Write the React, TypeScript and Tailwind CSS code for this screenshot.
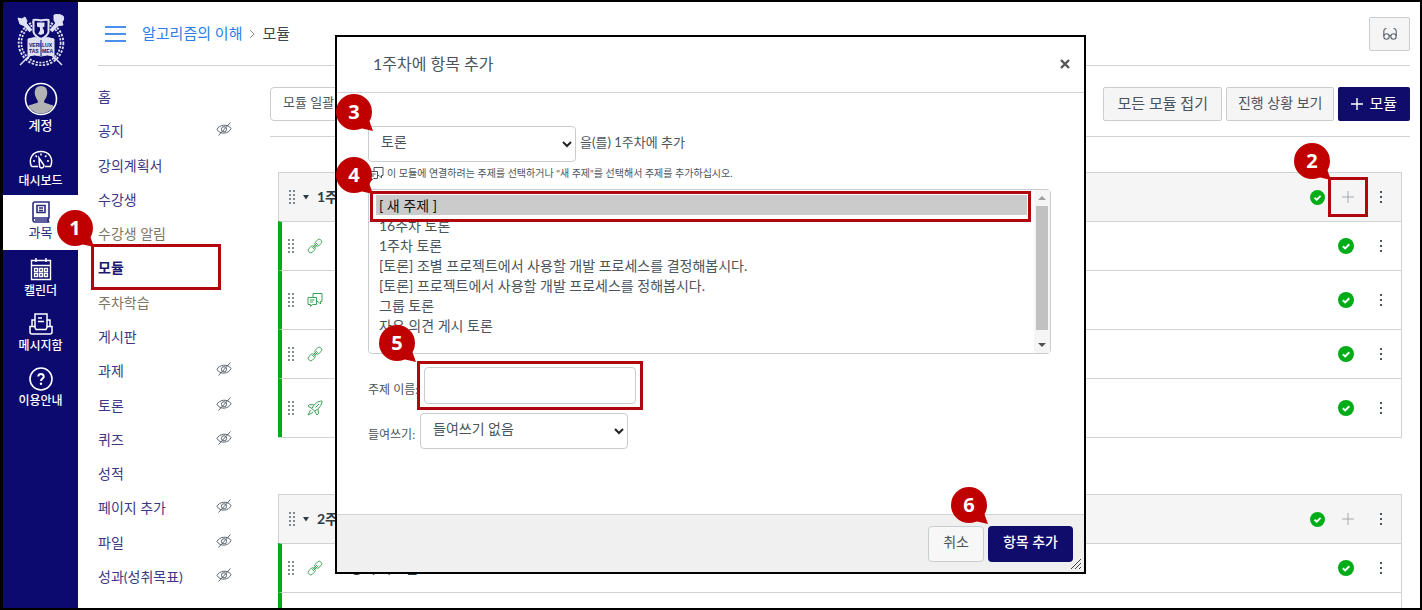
import { ReactNode } from "react"

interface IconProps {
    className?: string
}

interface MenuItem {
    label: string
    hidden?: boolean
    muted?: boolean
    active?: boolean
}

interface ModuleItem {
    title: string
    icon: ReactNode
    tall?: boolean
}

//* numbered red balloon, its tail points at the bottom right corner
const Callout: React.FC<{ value: number; className: string }> = ({ value, className }) => (
    <span className={`absolute z-10 flex h-[37px] w-[37px] pointer-events-none ${className}`}>
        <svg viewBox="0 0 37 37" className="absolute inset-0 h-full w-full" fill="#c00000" aria-hidden="true">
            <circle cx="18" cy="18" r="18" />
            <path d="M24 34L33 26L37 37Z" />
        </svg>
        <span className="relative w-9 text-center font-['Open_Sans',sans-serif] text-xl/[36px] font-bold text-white">{value}</span>
    </span>
)

const Crest = () => (
    <svg viewBox="0 0 50 52" className="h-[52px] w-[50px]" fill="none" stroke="#dfe2f4" aria-hidden="true">
        <circle cx="25" cy="29" r="21" strokeWidth="4.500" strokeDasharray="2.200 1.400" />
        <circle cx="25" cy="29" r="21" strokeWidth="1" stroke="#0c0a6e" />
        <path d="M6 7L15 17M44 7L35 17" strokeWidth="4" />
        <path d="M12 43L4 51M38 43L46 51M15 40L10 46M35 40L40 46" strokeWidth="1.500" />
        <path d="M2 4L6 5L9 3L11 7L9 12L4 10Z" fill="#dfe2f4" />
        <path d="M38 6L38 1Q43 -1 47 2Q49 5 46 8L47 11L41 12Z" fill="#dfe2f4" />
        <path d="M12 25Q19 22 25 25Q31 22 38 25V42Q31 40 25 42Q19 40 12 42Z" fill="#dfe2f4" strokeWidth="1" />
        <path d="M25 25V42" stroke="#0c0a6e" />
        <path d="M17.500 6Q21 5.500 25 6.500Q29 5.500 32.500 6V18Q31.500 22 25 25Q18.500 22 17.500 18Z" fill="#0c0a6e" strokeWidth="2" />
        <path d="M21 8.500H28.500V12.500L26.500 13.500L28 16.500V19.500L25 21L22 20L24 16.500V13.500L21 12.500Z" fill="#dfe2f4" stroke="none" />
        <g fill="#0c0a6e" stroke="none" className="font-['Liberation_Sans',sans-serif] text-[5px] font-bold">
            <text x="13" y="33">VERI</text>
            <text x="26" y="33">LUX</text>
            <text x="13" y="39">TAS</text>
            <text x="26" y="39">MEA</text>
        </g>
    </svg>
)

const Avatar = () => (
    <svg viewBox="0 0 34 34" className="h-[34px] w-[34px]" aria-hidden="true">
        <clipPath id="avatar"><circle cx="17" cy="17" r="14.500" /></clipPath>
        <g clipPath="url(#avatar)">
            <path d="M17 4C12 4 10 8 11 13C12 17 14 18 14 20C13 22 3 22 2 27V34H32V27C31 22 21 22 20 20C20 18 22 17 23 13C24 8 22 4 17 4Z" fill="#b3b3b3" />
        </g>
        <circle cx="17" cy="17" r="15.500" fill="none" stroke="#fff" strokeWidth="1.600" />
    </svg>
)

const DashboardIcon = () => (
    <svg viewBox="0 0 24 24" className="h-6 w-6" fill="none" stroke="currentColor" strokeWidth="1.5" aria-hidden="true">
        <path d="M2.500 19.500C-1 11 4 4.500 12 4.500S25 11 21.500 19.500H16M2.500 19.500H9" />
        <path d="M10 11L14.500 17.500A2.200 2.200 0 1 1 10.500 18.500Z" />
        <path d="M12 6.500V8.500M4 14H6M18 14H20M6.500 8.500L8 10M17.500 8.500L16 10" />
    </svg>
)

const CourseIcon = () => (
    <svg viewBox="0 0 24 24" className="h-6 w-6" fill="none" stroke="currentColor" strokeWidth="1.6" aria-hidden="true">
        <path d="M20 18V2H6Q4 2 4 4V20Q4 22 6 22H20.500M20.500 18H6Q4 18 4 20M6 20H20M19 18V22" />
        <path d="M8 5.500H16V12.500H8ZM10 8H14M10 10.500H14" />
    </svg>
)

const CalendarIcon = () => (
    <svg viewBox="0 0 24 24" className="h-6 w-6" fill="none" stroke="currentColor" strokeWidth="1.4" aria-hidden="true">
        <path d="M2.500 3.500H21.500V22.500H2.500ZM2.500 8.500H21.500M7 1V5M17 1V5" />
        <path d="M5.500 11.500H8.500V14.500H5.500ZM10.500 11.500H13.500V14.500H10.500ZM15.500 11.500H18.500V14.500H15.500ZM5.500 16.500H8.500V19.500H5.500ZM10.500 16.500H13.500V19.500H10.500ZM15.500 16.500H18.500V19.500H15.500Z" />
    </svg>
)

const InboxIcon = () => (
    <svg viewBox="0 0 24 24" className="h-6 w-6" fill="none" stroke="currentColor" strokeWidth="1.5" aria-hidden="true">
        <path d="M6 15V2H18V15M9 6H13M9 9.500H15" />
        <path d="M6 8H3V14.500M18 8H21V14.500M1 14.500V20Q1 22 3 22H21Q23 22 23 20V14.500H18.500L17 17.500H7L5.500 14.500Z" />
    </svg>
)

const HelpIcon = () => (
    <svg viewBox="0 0 24 24" className="h-6 w-6" fill="none" stroke="currentColor" aria-hidden="true">
        <circle cx="12" cy="12" r="11" strokeWidth="1.6" />
        <path d="M9.200 9.500Q9.500 7 12 7T14.800 9.500C14.800 11.500 12 11.500 12 14" strokeWidth="2" />
        <circle cx="12" cy="16.800" r="1.200" fill="currentColor" stroke="none" />
    </svg>
)

const HiddenIcon = () => (
    <svg viewBox="0 0 16 16" className="mb-1 h-4 w-4 text-[#5b656e]" fill="none" stroke="currentColor" strokeWidth="1" role="img" aria-label="숨김">
        <path d="M1 8.500C3 3.500 12 2.500 15 7.500C13 13 4 14 1 8.500Z" />
        <circle cx="8" cy="8.300" r="2.600" />
        <path d="M2.500 14.500L14.500 1.500" />
    </svg>
)

const DragDots = () => (
    <svg viewBox="0 0 8 16" className="h-4 w-2" fill="#4a545c" aria-hidden="true">
        {[2, 6, 10, 14].map((y) => (
            <g key={y}>
                <circle cx="2" cy={y} r="0.900" />
                <circle cx="6" cy={y} r="0.900" />
            </g>
        ))}
    </svg>
)

const LinkIcon = () => (
    <svg viewBox="0 0 16 16" className="h-4 w-4" fill="none" stroke="#3da354" strokeWidth="0.900" aria-hidden="true">
        <rect x="-3.800" y="-2.500" width="7.600" height="5" rx="2.300" transform="translate(11.300 4.700) rotate(-45)" />
        <rect x="-3.800" y="-2.500" width="7.600" height="5" rx="2.300" transform="translate(4.700 11.300) rotate(-45)" />
        <path d="M5 10L10 5M6 11L11 6" />
    </svg>
)

const DiscussionIcon: React.FC<IconProps> = ({ className = "text-[#3da354]" }) => (
    <svg viewBox="0 0 16 16" className={`h-4 w-4 ${className}`} fill="none" stroke="currentColor" strokeWidth="1" aria-hidden="true">
        <path d="M1 5.500H9.500V12.500H5.500L3.500 14.500V12.500H1ZM3 8H7.500M3 10H6" />
        <path d="M6 5.500V1.500H15V9.500H13.500V12L11 9.500H9.500" />
    </svg>
)

const RocketIcon = () => (
    <svg viewBox="0 0 16 16" className="h-4 w-4" fill="none" stroke="#3da354" strokeWidth="1" aria-hidden="true">
        <path d="M15 1C11 1 7 4 5 8.500L7.500 11C12 9 15 5 15 1ZM7 5L2.500 4.500L1 6L5 8.500M11 9L11.500 13.500L10 15L7.500 11" />
        <path d="M3.500 10L1 15L6 12.500" />
        <path d="M8.500 7.500L12 4" />
    </svg>
)

const Published: React.FC<IconProps> = ({ className = "" }) => (
    <svg viewBox="0 0 16 16" className={className} role="img" aria-label="게시됨">
        <circle cx="8" cy="8" r="8" fill="#00ac18" />
        <path d="M4.800 8.200L7.200 10.400L11.300 6.200" fill="none" stroke="#fff" strokeWidth="2" />
    </svg>
)

const Kebab = () => (
    <button type="button" aria-label="설정" className="flex w-4 flex-col items-center gap-[3px]">
        <span className="h-0.5 w-0.5 bg-[#4a545c]" />
        <span className="h-0.5 w-0.5 bg-[#4a545c]" />
        <span className="h-0.5 w-0.5 bg-[#4a545c]" />
    </button>
)

const Chevron = () => (
    <svg viewBox="0 0 10 8" className="pointer-events-none absolute right-1 top-1/2 h-2 w-2.5 -translate-y-1/2" fill="none" stroke="#222" strokeWidth="2" aria-hidden="true">
        <path d="M1 2L5 6L9 2" />
    </svg>
)

const globalNav = [
    { label: "대시보드", icon: <DashboardIcon /> },
    { label: "과목", icon: <CourseIcon />, active: true },
    { label: "캘린더", icon: <CalendarIcon /> },
    { label: "메시지함", icon: <InboxIcon /> },
    { label: "이용안내", icon: <HelpIcon /> },
]

const courseMenu: MenuItem[] = [
    { label: "홈" },
    { label: "공지", hidden: true },
    { label: "강의계획서" },
    { label: "수강생" },
    { label: "수강생 알림", muted: true },
    { label: "모듈", active: true },
    { label: "주차학습", muted: true },
    { label: "게시판" },
    { label: "과제", hidden: true },
    { label: "토론", hidden: true },
    { label: "퀴즈", hidden: true },
    { label: "성적" },
    { label: "페이지 추가", hidden: true },
    { label: "파일", hidden: true },
    { label: "성과(성취목표)", hidden: true },
]

const topics = [
    "[ 새 주제 ]",
    "16주차 토론",
    "1주차 토론",
    "[토론] 조별 프로젝트에서 사용할 개발 프로세스를 결정해봅시다.",
    "[토론] 프로젝트에서 사용할 개발 프로세스를 정해봅시다.",
    "그룹 토론",
    "자유 의견 게시 토론",
]

const GlobalNav = () => (
    <nav className="flex w-[75px] shrink-0 flex-col items-center bg-[#0c0a6e] pt-3 text-white">
        <a href="#home" aria-label="홈"><Crest /></a>
        <a href="#account" className="mt-4 flex h-[58px] flex-col items-center">
            <Avatar />
            <span className="text-[13px]/[18px] font-medium">계정</span>
        </a>
        {globalNav.map((item) => (
            <a
                key={item.label}
                href="#nav"
                className={`flex h-[55px] w-full flex-col items-center ${item.active ? "bg-white pt-[5px] text-[#2d2b80]" : "pt-[7px]"}`}
            >
                {item.icon}
                <span className={item.active ? "text-[13px]/[16px]" : "text-xs/[20px] font-medium"}>{item.label}</span>
            </a>
        ))}
    </nav>
)

const CourseMenu = () => (
    <nav className="flex w-[134px] shrink-0 flex-col py-3.5 text-sm">
        {courseMenu.map((item) => (
            <div key={item.label} className="relative flex flex-1 items-center justify-between">
                <a
                    href="#menu"
                    className={item.active ? "font-bold text-[#1c1a70]" : item.muted ? "text-[#7c7763]" : "text-[#3b3784]"}
                >
                    {item.label}
                </a>
                {item.hidden && <HiddenIcon />}
                {item.active && (
                    <span className="pointer-events-none absolute -bottom-1 -left-[7px] -top-[7px] right-[11px] border-3 border-[#b0060d]">
                        <Callout value={1} className="bottom-full right-full" />
                    </span>
                )}
            </div>
        ))}
    </nav>
)

const Module: React.FC<{ title: string; items: ModuleItem[]; marked?: boolean }> = ({ title, items, marked }) => (
    <section className="border border-[#cfd3d6]">
        <div className="flex h-12 items-center bg-[#f5f5f5] pl-[9px] pr-3">
            <DragDots />
            <svg viewBox="0 0 6 6" className="ml-[7px] h-1.5 w-1.5" fill="#2d3b45" aria-hidden="true"><path d="M0 1H6L3 5.500Z" /></svg>
            <h2 className="ml-2 text-sm font-bold text-[#2d3b45]">{title}</h2>
            <Published className="ml-auto h-[15px] w-[15px]" />
            <span className="relative mx-[3px] flex h-10 w-10 items-center justify-center">
                <button type="button" aria-label="항목 추가">
                    <svg viewBox="0 0 12 12" className="h-3 w-3" stroke="#a5a9ac" aria-hidden="true"><path d="M6 0V12M0 6H12" /></svg>
                </button>
                {marked && (
                    <span className="pointer-events-none absolute inset-0 border-3 border-[#b0060d]">
                        <Callout value={2} className="bottom-full right-full" />
                    </span>
                )}
            </span>
            <span className="ml-0.5"><Kebab /></span>
        </div>
        <ul>
            {items.map((item, i) => (
                <li
                    key={i}
                    className={`-ml-px flex items-center border-l-4 border-t border-l-[#00ac18] border-t-[#cfd3d6] pl-[5px] pr-3 ${item.tall ? "h-[59px]" : "h-[49px]"}`}
                >
                    <DragDots />
                    <span className="ml-3">{item.icon}</span>
                    <a href="#item" className="ml-[27px] text-sm text-[#2d3b45]">{item.title}</a>
                    <Published className="ml-auto mr-[19px] h-4 w-4" />
                    <Kebab />
                </li>
            ))}
        </ul>
    </section>
)

const AddItemDialog = () => (
    <div role="dialog" aria-labelledby="dialog-title" className="flex w-[751px] flex-col border-2 border-black bg-white text-[#4a545c]">
        <div className="flex h-14 items-center justify-between border-b border-[#cfd3d6] pb-0.5 pl-9 pr-3.5">
            <h1 id="dialog-title" className="text-base">1주차에 항목 추가</h1>
            <button type="button" aria-label="닫기">
                <svg viewBox="0 0 10 10" className="h-2.5 w-2.5" stroke="#555" strokeWidth="2.4" aria-hidden="true"><path d="M1 1L9 9M9 1L1 9" /></svg>
            </button>
        </div>
        <form className="px-[31px] pb-[65px] pt-[33px]">
            <div className="flex items-center gap-1">
                <div className="relative w-52">
                    <select id="kind" aria-label="항목 유형" className="h-9 w-full appearance-none rounded-sm border border-[#c7cdd1] bg-white px-3 pb-1 text-sm">
                        <option>토론</option>
                    </select>
                    <Chevron />
                    <Callout value={3} className="-top-8 -left-8" />
                </div>
                <label htmlFor="kind" className="pb-0.5 text-[13px]">을(를) 1주차에 추가</label>
            </div>
            <label htmlFor="topic" className="mb-1 flex h-[23px] items-center gap-[3px] text-[10px]">
                <DiscussionIcon className="text-[#4a545c]" />
                이 모듈에 연결하려는 주제를 선택하거나 "새 주제"를 선택해서 주제를 추가하십시오.
            </label>
            <div className="relative flex h-[165px] w-[683px] rounded-sm border border-[#c7cdd1]">
                <select
                    id="topic"
                    size={7}
                    defaultValue={topics[0]}
                    className="h-full min-w-0 flex-1 appearance-none overflow-hidden px-[7px] py-[5px] text-sm outline-none"
                >
                    {topics.map((topic) => (
                        <option key={topic} className="h-5 px-[3px] py-0 leading-5 checked:bg-[linear-gradient(#cbcbcb,#cbcbcb)]">{topic}</option>
                    ))}
                </select>
                <div className="flex w-4 flex-col items-center justify-between bg-[#f5f5f5] py-1.5" aria-hidden="true">
                    <svg viewBox="0 0 8 4" className="h-1 w-2" fill="#a0a0a0"><path d="M4 0L8 4H0Z" /></svg>
                    <span className="mb-2 h-[124px] w-3 bg-[#c1c1c1]" />
                    <svg viewBox="0 0 8 4" className="h-1 w-2" fill="#505050"><path d="M0 0H8L4 4Z" /></svg>
                </div>
                <span className="pointer-events-none absolute left-px right-[19px] top-px h-[31px] border-3 border-[#b0060d]">
                    <Callout value={4} className="bottom-full right-full" />
                </span>
            </div>
            <div className="mt-[13px] flex items-center">
                <label htmlFor="name" className="w-14 whitespace-nowrap pt-2 text-xs">주제 이름:</label>
                <div className="relative">
                    <input id="name" type="text" className="block h-[37px] w-[212px] rounded-sm border border-[#c7cdd1] px-3 text-sm" />
                    <span className="pointer-events-none absolute -inset-x-[7px] -bottom-1.5 -top-1.5 border-3 border-[#b0060d]">
                        <Callout value={5} className="bottom-full right-full mb-0.5 mr-1" />
                    </span>
                </div>
            </div>
            <div className="mt-[9px] flex items-center">
                <label htmlFor="indent" className="w-[52px] whitespace-nowrap pt-2 text-xs">들여쓰기:</label>
                <div className="relative w-52">
                    <select id="indent" className="h-9 w-full appearance-none rounded-sm border border-[#c7cdd1] bg-white px-3 pb-1 text-sm">
                        <option>들여쓰기 없음</option>
                    </select>
                    <Chevron />
                </div>
            </div>
        </form>
        <div className="relative flex h-[58px] items-center justify-end gap-1 border-t border-[#cfd3d6] bg-[#f0f0f0] pr-[11px]">
            <button type="button" className="h-9 rounded-sm border border-[#c7cdd1] bg-[#f7f7f7] px-3.5 pb-1 text-sm">취소</button>
            <button type="button" className="relative h-9 rounded-sm bg-[#100c6c] px-[15px] pb-1 text-sm font-medium text-white">
                항목 추가
                <Callout value={6} className="bottom-full right-full mb-0.5" />
            </button>
            <svg viewBox="0 0 12 12" className="absolute bottom-0.5 right-0.5 h-3 w-3" stroke="#444" aria-hidden="true"><path d="M1 11L11 1M5 11L11 5M9 11L11 9" /></svg>
        </div>
    </div>
)

const App = () => {
    return (
        <div className="relative flex h-screen overflow-hidden border-2 border-l-3 border-black bg-white font-[Lato,'Noto_Sans_CJK_KR',sans-serif]">
            <GlobalNav />
            <div className="flex min-w-0 flex-1 flex-col pl-5 pr-2.5">
                <header className="flex h-16 shrink-0 items-center border-b border-[#cfd3d6] pl-[7px]">
                    <button type="button" aria-label="과목 메뉴" className="flex w-[21px] flex-col gap-[5px]">
                        <span className="h-0.5 bg-[#4a8ff0]" />
                        <span className="h-0.5 bg-[#4a8ff0]" />
                        <span className="h-0.5 bg-[#4a8ff0]" />
                    </button>
                    <nav className="ml-4 flex items-center gap-[7px] text-[15px]">
                        <a href="#course" className="text-[#2b7de9]">알고리즘의 이해</a>
                        <svg viewBox="0 0 6 8" className="h-2 w-1.5" fill="none" stroke="#8b9299" aria-hidden="true"><path d="M1 0L5 4L1 8" /></svg>
                        <span className="text-[#3c4650]">모듈</span>
                    </nav>
                    <button type="button" aria-label="학생으로 보기" className="ml-auto flex h-[34px] w-[41px] items-center justify-center rounded-xs border border-[#c7cdd1] bg-[#f5f5f5]">
                        <svg viewBox="0 0 16 14" className="h-3.5 w-4" fill="none" stroke="#5b656e" strokeWidth="1.1" aria-hidden="true">
                            <circle cx="4.500" cy="9.500" r="2.700" /><circle cx="11.500" cy="9.500" r="2.700" />
                            <path d="M7 9Q8 8 9 9M1.800 9V4Q2 1.500 4.500 1.500M14.200 9V4Q14 1.500 11.500 1.500" />
                        </svg>
                    </button>
                </header>
                <div className="flex min-h-0 flex-1 gap-[38px]">
                    <CourseMenu />
                    <main className="min-w-0 flex-1">
                        <div className="flex items-center gap-1 border-b border-[#cfd3d6] pb-[15px] pt-[21px] text-[#4a545c]">
                            <button type="button" className="mr-auto h-[34px] rounded-sm border border-[#c7cdd1] px-3 pb-0.5 text-[13px]">모듈 일괄 편집</button>
                            <button type="button" className="h-[34px] rounded-xs border border-[#c7cdd1] bg-[#f5f5f5] px-[13px] pb-0.5 text-[15px]">모든 모듈 접기</button>
                            <button type="button" className="h-[34px] rounded-xs border border-[#c7cdd1] bg-[#f5f5f5] px-[11px] pb-0.5 text-sm">진행 상황 보기</button>
                            <button type="button" className="flex h-[34px] items-center gap-1.5 rounded-xs bg-[#100c6c] px-[13px] text-[15px] text-white">
                                <svg viewBox="0 0 12 12" className="h-3 w-3" stroke="#fff" strokeWidth="1.4" aria-hidden="true"><path d="M6 0V12M0 6H12" /></svg>
                                <span className="pb-0.5">모듈</span>
                            </button>
                        </div>
                        <div className="flex flex-col gap-14 px-2 pt-[35px]">
                            <Module
                                title="1주차"
                                marked
                                items={[
                                    { title: "강의 자료", icon: <LinkIcon /> },
                                    { title: "1주차 토론", icon: <DiscussionIcon />, tall: true },
                                    { title: "참고 자료", icon: <LinkIcon /> },
                                    { title: "강의 영상", icon: <RocketIcon />, tall: true },
                                ]}
                            />
                            <Module
                                title="2주차"
                                items={[
                                    { title: "강의 자료실", icon: <LinkIcon /> },
                                    { title: "강의 영상", icon: <RocketIcon />, tall: true },
                                ]}
                            />
                        </div>
                    </main>
                </div>
            </div>
            <div className="pointer-events-none absolute inset-0 z-20 flex items-start justify-center pr-0.5 pt-[33px]">
                <div className="pointer-events-auto"><AddItemDialog /></div>
            </div>
        </div>
    )
}

export default App
